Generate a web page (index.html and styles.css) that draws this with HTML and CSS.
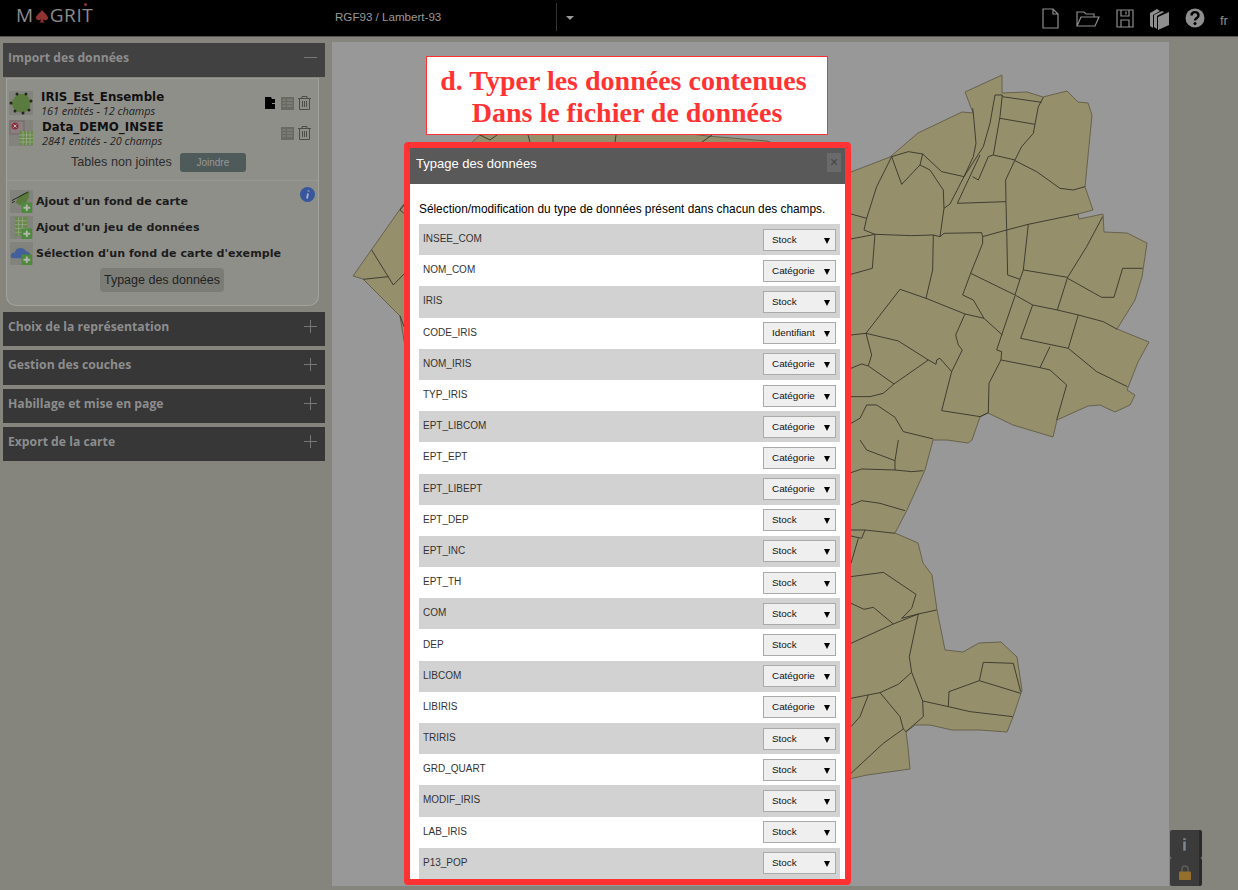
FILE: index.html
```html
<!DOCTYPE html>
<html lang="fr">

<head>
  <meta charset="UTF-8">
  <title>Magrit</title>
  <link rel="stylesheet" href="styles.css">
</head>

<body>
  <!-- Barre du haut -->
  <div class="topbar">
    <div class="logo">M<svg class="spade" viewBox="0 0 14 14"><path d="M7 1C5 4 1 6 1 9c0 2 3 3 5 1.500C6 12 5 13 4 13.500h6C9 13 8 12 8 10.500 10 12 13 11 13 9c0-3-4-5-6-8z"/></svg>GRIT<span class="logo-dot"></span></div>
    <div class="proj">RGF93 / Lambert-93</div>
    <div class="proj-caret"></div>
    <div class="top-icons">
      <svg class="ico-file" viewBox="0 0 17 21"><path d="M1 1h10l5 5v14H1zM11 1v5h5"/></svg>
      <svg class="ico-folder" viewBox="0 0 24 19"><path d="M1 17V3h7l2 2h8v3M1 17l4-9h18l-4 9z"/></svg>
      <svg class="ico-save" viewBox="0 0 18 19"><path d="M1 1h16v17H1zM5 1v6h8V1M10 2.500v3M5 18v-7h8v7"/></svg>
      <svg class="ico-books" viewBox="0 0 20 22"><path class="solid" d="M0 5l7-4 3 2-7 4v13l-3-2zM4 7l8-4 2 1-7 4v13l-3-2zM8 9l11-5v13L8 22z"/></svg>
      <svg class="ico-help" viewBox="0 0 20 20"><circle class="solid" cx="10" cy="10" r="9.500"/><path class="mark" d="M6.500 7.500c0-4.500 7-4.500 7 0 0 2.500-3.500 2.500-3.500 5"/><circle class="dot" cx="10" cy="15.500" r="1.500"/></svg>
      <span class="lang">fr</span>
    </div>
  </div>

  <div class="main">
    <!-- Menu de gauche -->
    <div class="sidebar">
      <div class="section-head first"><span>Import des données</span><i class="minus"></i></div>
      <div class="panel">
        <div class="layer">
          <svg class="layer-ico" viewBox="0 0 24 24"><rect width="24" height="24" fill="#83837d"/><path d="M8 3l9 0 5 7-2 9-6 3-8-2-4-8z" fill="#5b7a3d"/><g fill="#22261c"><circle cx="8" cy="3" r="1.500"/><circle cx="17" cy="3" r="1.500"/><circle cx="22" cy="10" r="1.500"/><circle cx="20" cy="19" r="1.500"/><circle cx="14" cy="22" r="1.500"/><circle cx="6" cy="20" r="1.500"/><circle cx="2" cy="12" r="1.500"/></g></svg>
          <div class="layer-text">
            <div class="layer-name">IRIS_Est_Ensemble</div>
            <div class="layer-info">161 entités - 12 champs</div>
          </div>
          <div class="layer-actions">
            <svg class="a-doc" viewBox="0 0 10 12"><path d="M0 0h6l1 2h3v4H7v1h3v5H0z" fill="#000"/></svg>
            <svg class="a-table" viewBox="0 0 13 13"><path d="M0 0h13v13H0z" fill="#6a6a65"/><path d="M1.500 3h3M1.500 6h3M1.500 9h3M6 3h5.500M6 6h5.500M6 9h5.500" stroke="#8c8c86"/></svg>
            <svg class="a-trash" viewBox="0 0 13 14"><path d="M0 2.500h13M4 2.500V.5h5v2M1.500 2.500v11h10v-11M4.500 5v6M6.500 5v6M8.500 5v6" fill="none" stroke="#4c4c48"/></svg>
          </div>
        </div>
        <div class="layer second">
          <svg class="layer-ico" viewBox="0 0 24 26"><rect width="24" height="26" fill="#83837d"/><rect x="1" y="1" width="14" height="13" fill="#8b7f80" stroke="#77656a"/><circle cx="6" cy="6" r="3.500" fill="#8a2f3e"/><path d="M4.500 4.500l3 3m0-3l-3 3" stroke="#bbb"/><rect x="10" y="11" width="14" height="14" fill="#6a8a4a"/><path d="M10 15h14M10 18.500h14M10 22h14M14 11v14M17.500 11v14M21 11v14" stroke="#98a98a" stroke-width=".8"/></svg>
          <div class="layer-text">
            <div class="layer-name">Data_DEMO_INSEE</div>
            <div class="layer-info">2841 entités - 20 champs</div>
          </div>
          <div class="layer-actions">
            <svg class="a-table" viewBox="0 0 13 13"><path d="M0 0h13v13H0z" fill="#6a6a65"/><path d="M1.500 3h3M1.500 6h3M1.500 9h3M6 3h5.500M6 6h5.500M6 9h5.500" stroke="#8c8c86"/></svg>
            <svg class="a-trash" viewBox="0 0 13 14"><path d="M0 2.500h13M4 2.500V.5h5v2M1.500 2.500v11h10v-11M4.500 5v6M6.500 5v6M8.500 5v6" fill="none" stroke="#4c4c48"/></svg>
          </div>
        </div>
        <div class="join-row">
          <span>Tables non jointes</span>
          <button class="join-btn">Joindre</button>
        </div>
        <div class="sep"></div>
        <svg class="help-bubble" viewBox="0 0 15 15"><circle cx="7.500" cy="7.500" r="7.500" fill="#37569c"/><path d="M8.500 3.500v1M8 6.500L7 11.500" stroke="#a9b4c9" stroke-width="1.800"/></svg>
        <div class="add-row">
          <svg class="add-ico" viewBox="0 0 24 24"><rect width="24" height="24" fill="#83837d"/><path d="M6 13C8 6 13 3 20 2c0 8-3 13-10 14z" fill="#5b7a3d"/><path d="M2 11l17-9M2 13l3-1" stroke="#22261c" fill="none"/><rect x="12" y="13" width="11" height="11" rx="1" fill="#4d8a3d"/><path d="M17.500 15v7M14 18.500h7" stroke="#b5b5ae" stroke-width="2"/></svg>
          <span>Ajout d'un fond de carte</span>
        </div>
        <div class="add-row">
          <svg class="add-ico" viewBox="0 0 24 24"><rect width="24" height="24" fill="#83837d"/><rect x="5" y="1" width="13" height="20" fill="#6a8a4a"/><path d="M5 5h13M5 9h13M5 13h13M5 17h13M9 1v20M13 1v20" stroke="#98a98a" stroke-width=".8"/><rect x="12" y="13" width="11" height="11" rx="1" fill="#4d8a3d"/><path d="M17.500 15v7M14 18.500h7" stroke="#b5b5ae" stroke-width="2"/></svg>
          <span>Ajout d'un jeu de données</span>
        </div>
        <div class="add-row">
          <svg class="add-ico" viewBox="0 0 24 24"><rect width="24" height="24" fill="#83837d"/><path d="M2 17c-3-3 0-7 3-6 1-6 10-6 12-1 4 0 6 5 3 7z" fill="#44609a"/><rect x="12" y="13" width="11" height="11" rx="1" fill="#4d8a3d"/><path d="M17.500 15v7M14 18.500h7" stroke="#b5b5ae" stroke-width="2"/></svg>
          <span>Sélection d'un fond de carte d'exemple</span>
        </div>
        <div class="typage-wrap"><button class="typage-btn">Typage des données</button></div>
      </div>
      <div class="section-head"><span>Choix de la représentation</span><i class="plus"></i></div>
      <div class="section-head"><span>Gestion des couches</span><i class="plus"></i></div>
      <div class="section-head"><span>Habillage et mise en page</span><i class="plus"></i></div>
      <div class="section-head"><span>Export de la carte</span><i class="plus"></i></div>
    </div>

    <!-- Carte -->
    <div class="map">
      <svg class="map-svg" viewBox="332 42 837 844">
        <path class="land" d="M965 92L1002 75 1002 93 1027 92 1043 97 1067 91 1078 102 1088 103 1092 115 1085 187 1093 210 1078 214 1079 219 1103 214 1104 232 1127 233 1147 243 1142 277 1135 300 1117 329 1149 342 1138 362 1127 390 1135 395 1130 405 1115 412 1100 405 1088 406 1057 420 1053 437 1013 425 988 413 980 417 972 440 968 443 947 440 933 440 925 470 907 510 895 533 918 543 923 563 932 575 937 610 945 650 963 652 979 643 1001 642 1017 657 1022 690 1013 717 1007 732 980 730 952 730 930 725 915 725 906 732 908 747 910 769 867 775 800 790 600 790 480 700 430 500 400 316 363 279 353 276 403 205 480 135 620 125 707 136 767 141 851 172 890 157 918 133 962 112 973 113 970 105z"/>
        <g class="borders" transform="translate(840 40) scale(.3333)">
          <path d="M465 165L487 165M465 165L450 250 430 320 372 410 330 492M487 165L480 230 460 345 445 350 415 420 398 410M420 345L352 490"/>
          <path d="M487 170L605 187M480 235L585 253M610 172L595 200 585 253 580 280 545 320 525 360"/>
          <path d="M460 345L525 360 497 420 498 485 352 490M330 492L312 505"/>
          <path d="M398 205L400 220 408 310 400 350 372 410 305 395 248 342 205 335 155 350"/>
          <path d="M155 350L185 433 240 375 248 342M240 375L270 390 310 450 312 505 300 590"/>
          <path d="M155 350L110 440 80 535 72 570 105 583 215 587 280 585 300 590 312 580 425 578 428 590 500 570 565 553 715 522"/>
          <path d="M525 362L590 395 660 445 700 450 735 440"/>
          <path d="M498 485L500 565 503 705 540 718 550 690 565 553"/>
          <path d="M33 522L80 535M105 583L33 597M105 583L97 685 33 703"/>
          <path d="M280 585L278 690 258 775 180 748 78 880 33 885M258 775L375 822 432 835 400 780 368 765 392 700 428 610 428 590"/>
          <path d="M392 700L525 765 540 718M550 690L683 712 652 810M683 712L740 620 788 530M683 715L785 772 822 772 848 685 908 685"/>
          <path d="M525 765L578 795 652 810 715 825 790 845 832 868M578 795L542 895 685 925 715 825"/>
          <path d="M525 768L485 885 470 930 485 935 483 960 600 983 630 920M432 835L487 885M375 822L347 885 355 915 367 930 335 995 300 955 290 960 288 973 265 960 175 903 78 880 95 945 85 978"/>
          <path d="M685 925L770 995 862 1040M483 960L447 1030 445 1118M335 995L305 1112 420 1130 445 1118"/>
          <path d="M600 983L630 990 680 1035 650 1140"/>
          <path d="M265 960L162 1032 85 978 65 972 33 985M162 1032L130 1060 90 1070 33 1070M80 1095L110 1095 165 1132 190 1175 280 1197M80 1095L60 1135 33 1150"/>
        </g>
        <g class="borders" transform="translate(840 440) scale(.3333)">
          <path d="M60 0L80 30 165 62 165 90M175 0L165 62M33 98L65 87 165 90 215 95 250 92"/>
          <path d="M33 195L65 182 120 190 195 212M33 270L75 270 165 280M75 270L65 295 33 288M55 295L33 370"/>
          <path d="M33 410L130 397 228 463 215 505 185 535 235 522 290 510M33 490L72 508 100 502 160 552M33 610L160 552 235 522"/>
          <path d="M235 522L208 650 215 697 248 783 325 800 390 815 518 830M325 800L327 755 418 722 542 760M418 722L430 667 520 670 542 755"/>
          <path d="M215 697L175 733 120 758 33 775M85 765L60 830 33 860M120 758L180 830 190 867 130 910 33 1000M248 783L250 830 198 875 190 867"/>
        </g>
        <g class="borders" transform="translate(330 150) scale(.3333)">
          <path d="M125 300L190 405 222 372M100 388L175 380M210 497L222 530M222 165L210 180 222 190"/>
        </g>
        <path class="ticks" d="M480 135L490 140 497 135M528 135L530 142M553 135L553 142M616 135L615 142M702 142L712 135"/>
      </svg>
      <div class="map-btns">
        <div class="map-btn"><svg class="btn-i" viewBox="0 0 6 15"><path d="M1.500 0h3v2h-3zM1.500 4h3v11h-3z" fill="#7c8794"/></svg></div>
        <div class="map-btn"><svg viewBox="0 0 12 15"><path d="M3 7V4c0-4 6-4 6 0v3" fill="none" stroke="#5c5c5c" stroke-width="1.500"/><rect y="6.500" width="12" height="8.500" rx="1" fill="#94702c"/></svg></div>
      </div>
    </div>
  </div>

  <!-- Annotation -->
  <div class="banner">d. Typer les données contenues<br>&nbsp;Dans le fichier de données</div>

  <!-- Fenetre modale -->
  <div class="modal">
    <div class="modal-head">
      <span>Typage des données</span>
      <div class="modal-close">×</div>
    </div>
    <div class="modal-body">
      <p>Sélection/modification du type de données présent dans chacun des champs.</p>
      <div class="row"><span>INSEE_COM</span><div class="sel">Stock</div></div>
      <div class="row"><span>NOM_COM</span><div class="sel">Catégorie</div></div>
      <div class="row"><span>IRIS</span><div class="sel">Stock</div></div>
      <div class="row"><span>CODE_IRIS</span><div class="sel">Identifiant</div></div>
      <div class="row"><span>NOM_IRIS</span><div class="sel">Catégorie</div></div>
      <div class="row"><span>TYP_IRIS</span><div class="sel">Catégorie</div></div>
      <div class="row"><span>EPT_LIBCOM</span><div class="sel">Catégorie</div></div>
      <div class="row"><span>EPT_EPT</span><div class="sel">Catégorie</div></div>
      <div class="row"><span>EPT_LIBEPT</span><div class="sel">Catégorie</div></div>
      <div class="row"><span>EPT_DEP</span><div class="sel">Stock</div></div>
      <div class="row"><span>EPT_INC</span><div class="sel">Stock</div></div>
      <div class="row"><span>EPT_TH</span><div class="sel">Stock</div></div>
      <div class="row"><span>COM</span><div class="sel">Stock</div></div>
      <div class="row"><span>DEP</span><div class="sel">Stock</div></div>
      <div class="row"><span>LIBCOM</span><div class="sel">Catégorie</div></div>
      <div class="row"><span>LIBIRIS</span><div class="sel">Catégorie</div></div>
      <div class="row"><span>TRIRIS</span><div class="sel">Stock</div></div>
      <div class="row"><span>GRD_QUART</span><div class="sel">Stock</div></div>
      <div class="row"><span>MODIF_IRIS</span><div class="sel">Stock</div></div>
      <div class="row"><span>LAB_IRIS</span><div class="sel">Stock</div></div>
      <div class="row"><span>P13_POP</span><div class="sel">Stock</div></div>
    </div>
  </div>
</body>

</html>
```

FILE: styles.css
```css
* {
  box-sizing: border-box;
}

html,
body {
  height: 100%;
}

body {
  margin: 0;
  height: 890px;
  overflow: hidden;
  display: flex;
  flex-direction: column;
  position: relative;
  background: #85857e;
  font-family: "Liberation Sans", sans-serif;
}

.topbar {
  height: 37px;
  flex: none;
  display: flex;
  align-items: center;
  background: #000;
  border-bottom: 1px solid #55554f;
  color: #999;
}

.logo {
  width: 319px;
  margin-left: 16px;
  margin-top: -7px;
  display: flex;
  align-items: center;
  position: relative;
  font-family: "Open Sans", sans-serif;
  font-size: 19px;
  letter-spacing: .6px;
  color: #8c8c8c;
}

.spade {
  width: 14px;
  height: 14px;
  margin: 2px 1px 0;
  fill: #8e3232;
}

.logo-dot {
  position: absolute;
  left: 68px;
  top: 1px;
  width: 3px;
  height: 3px;
  border-radius: 50%;
  background: #8e3232;
}

.proj {
  width: 222px;
  font-size: 11.600px;
  margin-top: -2px;
  border-right: 1px solid #333;
  line-height: 28px;
}

.proj-caret {
  margin: -1px 0 0 9px;
  border-left: 4.500px solid transparent;
  border-right: 4.500px solid transparent;
  border-top: 4.500px solid #999;
}

.top-icons {
  margin-left: auto;
  display: flex;
  align-items: center;
  height: 36px;
  position: relative;
  width: 200px;
}

.top-icons svg {
  position: absolute;
  fill: none;
  stroke: #8e8e8e;
  stroke-width: 1.200;
}

.top-icons .solid {
  fill: #8e8e8e;
  stroke: none;
}

.ico-file {
  left: 4px;
  top: 8px;
  width: 17px;
  height: 21px;
}

.ico-folder {
  left: 38px;
  top: 9px;
  width: 24px;
  height: 19px;
}

.ico-save {
  left: 78px;
  top: 9px;
  width: 18px;
  height: 19px;
}

.ico-books {
  left: 112px;
  top: 8px;
  width: 20px;
  height: 22px;
}

.ico-help {
  left: 147px;
  top: 8px;
  width: 20px;
  height: 20px;
}

.ico-help .mark {
  stroke: #000;
  stroke-width: 2.400;
}

.ico-help .dot {
  fill: #000;
  stroke: none;
}

.lang {
  position: absolute;
  left: 182px;
  top: 13px;
  font-size: 13px;
  color: #8e8e8e;
}

.main {
  flex: 1;
  display: flex;
  min-height: 0;
  padding: 5px 69px 4px 3px;
}

.sidebar {
  width: 322px;
  margin-right: 7px;
  flex: none;
}

.section-head {
  height: 34.200px;
  margin-top: 4px;
  padding: 0 8px 5px 5px;
  display: flex;
  align-items: center;
  justify-content: space-between;
  background: #373737;
  color: #8d8d8d;
  font-family: "Open Sans", sans-serif;
  font-weight: 700;
  font-size: 12.200px;
}

.section-head.first {
  margin-top: 1px;
  background: #414141;
}

.minus {
  width: 13px;
  height: 1px;
  background: #777;
}

.plus {
  width: 13px;
  height: 13px;
  background:
    linear-gradient(#777, #777) center / 13px 1px no-repeat,
    linear-gradient(#777, #777) center / 1px 13px no-repeat;
}

.panel {
  position: relative;
  width: 313px;
  height: 228px;
  margin: 1px 0 6px 3px;
  padding-top: 11px;
  background: #8f8f8a;
  border: 1px solid #a3a39e;
  border-top-color: #9c9c96;
  border-radius: 0 0 10px 10px;
}

.layer {
  display: flex;
  align-items: center;
  height: 26px;
  padding-left: 2px;
}

.layer.second {
  margin-top: 4px;
}

.layer-ico {
  width: 24px;
  height: 24px;
  flex: none;
}

.second .layer-ico {
  height: 26px;
}

.layer-text {
  margin-left: 8px;
}

.second .layer-text {
  margin-left: 9px;
}

.layer-name {
  font-family: "DejaVu Sans", sans-serif;
  font-weight: 700;
  font-size: 11.800px;
  line-height: 14px;
  color: #111;
}

.layer-info {
  font-family: "Open Sans", sans-serif;
  font-style: italic;
  font-size: 10.900px;
  line-height: 13px;
  color: #222;
}

.layer-actions {
  margin-left: auto;
  margin-right: 7px;
  display: flex;
  align-items: center;
  gap: 4px;
}

.a-doc {
  width: 10px;
  height: 12px;
  margin-right: 2px;
}

.a-table {
  width: 13px;
  height: 13px;
}

.a-trash {
  width: 13px;
  height: 14px;
}

.join-row {
  display: flex;
  align-items: center;
  height: 20px;
  margin-top: 6px;
  padding-left: 64px;
  gap: 8px;
  font-size: 12.600px;
  color: #2c2c2c;
}

.join-btn {
  width: 66px;
  height: 19px;
  padding: 0;
  border: 0;
  border-radius: 3px;
  background: #4f5a5a;
  color: #989898;
  font-family: inherit;
  font-size: 10px;
}

.sep {
  height: 1px;
  margin-top: 8px;
  background: #999994;
}

.help-bubble {
  position: absolute;
  left: 293px;
  top: 108px;
  width: 15px;
  height: 15px;
}

.add-row {
  display: flex;
  align-items: center;
  height: 23px;
  margin-top: 3px;
  padding-left: 3px;
  gap: 3px;
  font-family: "DejaVu Sans", sans-serif;
  font-weight: 700;
  font-size: 11.100px;
  color: #1c1c1c;
}

.sep + .help-bubble + .add-row {
  margin-top: 9px;
}

.add-ico {
  width: 23px;
  height: 23px;
  flex: none;
}

.typage-wrap {
  display: flex;
  justify-content: center;
  margin: 3px 0 0 -1px;
}

.typage-btn {
  width: 124px;
  height: 24px;
  padding: 0;
  border: 0;
  border-radius: 4px;
  background: #7c7c77;
  color: #222;
  font-family: inherit;
  font-size: 12.500px;
}

.map {
  flex: 1;
  position: relative;
  background: #989898;
}

.map-svg {
  display: block;
  width: 100%;
  height: 100%;
}

.land {
  fill: #968f6c;
  stroke: #66624e;
  stroke-width: 1;
}

.borders path,
.ticks {
  fill: none;
  stroke: #35342a;
  stroke-width: 2.700;
}

.ticks {
  stroke-width: .9;
}

.map-btns {
  position: absolute;
  right: -33px;
  bottom: 0;
  width: 32px;
}

.map-btn {
  height: 28px;
  display: flex;
  align-items: center;
  justify-content: center;
  background: #3b3b3b;
  border-right: 3px solid #2a2a2a;
  border-radius: 2px;
}

.map-btn svg {
  height: 15px;
  width: 12px;
}

.map-btn .btn-i {
  height: 13px;
  width: 5px;
}

.banner {
  position: absolute;
  left: 426px;
  top: 56px;
  width: 402px;
  height: 79px;
  padding: 8px 7px 0 0;
  background: #fff;
  border: 1px solid #f33;
  text-align: center;
  font-family: "Liberation Serif", serif;
  font-weight: 700;
  font-size: 28px;
  line-height: 32px;
  color: #f33;
}

.modal {
  position: absolute;
  left: 404px;
  top: 142px;
  width: 447px;
  height: 743px;
  border: 6px solid #f33;
  border-radius: 4px;
  background: #fff;
  overflow: hidden;
}

.modal-head {
  height: 36px;
  padding: 0 4px 5px 6px;
  display: flex;
  align-items: center;
  justify-content: space-between;
  background: #595959;
  color: #fff;
  font-size: 13px;
}

.modal-close {
  width: 14px;
  height: 19px;
  margin-top: -3px;
  background: #6a6a6a;
  color: #444;
  font-size: 14px;
  line-height: 18px;
  text-align: center;
}

.modal-body {
  padding: 0 5px 0 9px;
}

.modal-body p {
  margin: 0;
  padding-top: 18px;
  height: 40px;
  font-size: 11.850px;
  line-height: 15px;
  color: #000;
}

.row {
  height: 31.200px;
  padding: 0 4px 2px;
  display: flex;
  align-items: center;
  justify-content: space-between;
  font-size: 10px;
  color: #333;
}

.row:nth-of-type(odd) {
  background: #d2d2d2;
}

.sel {
  position: relative;
  width: 73px;
  height: 22px;
  padding-left: 8px;
  margin-top: 2px;
  background: #efefef;
  border: 1px solid #aaa;
  font-size: 9.900px;
  line-height: 20px;
  color: #111;
}

.sel::after {
  content: "";
  position: absolute;
  right: 5px;
  top: 8px;
  border-left: 3px solid transparent;
  border-right: 3px solid transparent;
  border-top: 6px solid #000;
}
```
